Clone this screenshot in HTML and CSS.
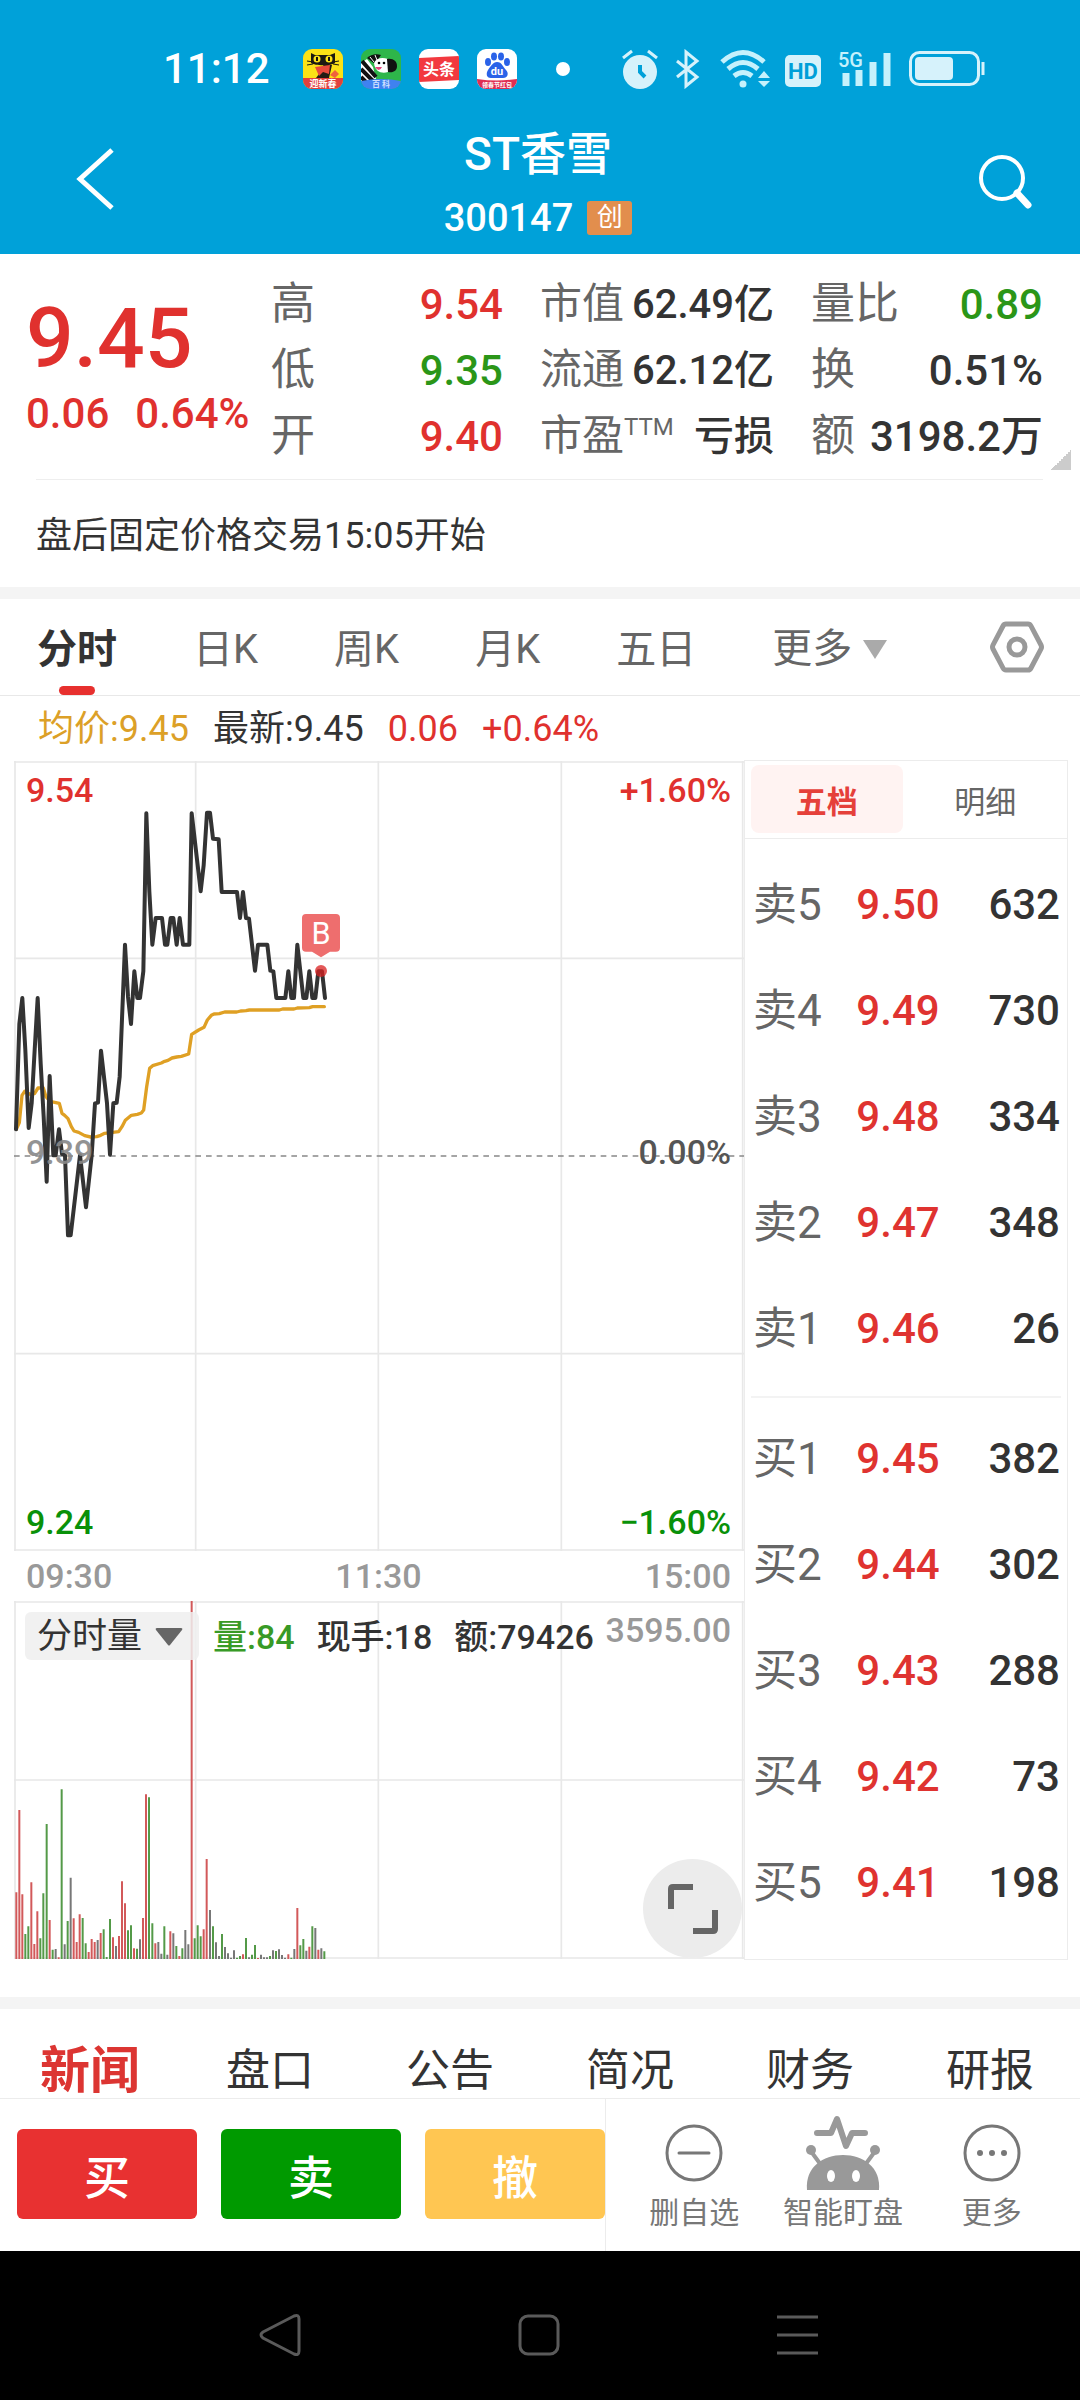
FILE: index.html
```html
<!DOCTYPE html>
<html lang="zh-CN">
<head>
<meta charset="utf-8">
<meta name="viewport" content="width=device-width, initial-scale=1">
<title>ST香雪 300147</title>
<link rel="stylesheet" href="styles.css">
</head>
<body>
<header class="top">
  <div class="status">
    <span class="clock">11:12</span>
    <div class="apps">
      <svg class="app" viewBox="0 0 40 40"><defs><clipPath id="tile"><rect width="40" height="40" rx="9"/></clipPath></defs><g clip-path="url(#tile)"><rect width="40" height="40" fill="#fbe216"/><path d="M8 4l4 2h15l5-2v10c-4 3-20 3-24 0z" fill="#1c1a12"/><path d="M4 12l6 1M4 16l6-1M36 12l-6 1M36 16l-6-1" stroke="#1c1a12"/><circle cx="14" cy="10" r="3.500" fill="#fbe216"/><circle cx="26" cy="10" r="3.500" fill="#fbe216"/><path d="M14 8v4M26 8v4" stroke="#111" stroke-width="2"/><path d="M21 15l8 1-3 13H13l3-4z" fill="#221c14"/><path d="M12 18l15-2-1 9-6-2-4 4z" fill="#e84a3c"/><path d="M27 26l5-5 4 4-4 4z" fill="#f0623c"/><rect y="29" width="40" height="11" fill="#e2403c"/><text x="20" y="38" class="tile-text" font-size="9" fill="#fff">迎新春</text></g></svg>
      <svg class="app" viewBox="0 0 40 40"><g clip-path="url(#tile)"><rect width="40" height="40" fill="#2eb64a"/><path d="M0 14l6-4 6 8 3 12-15 2z" fill="#fff"/><path d="M0 20l12 12M1 12l14 16M0 28l5 5" stroke="#111" stroke-width="4"/><path d="M6 9c3-3 9-5 14-3l-6 9z" fill="#111"/><path d="M9 8l4 5M14 6l2 5" stroke="#fff" stroke-width="1"/><path d="M13 14c2-5 8-6 14-4v13c-6 2-13 0-14-9z" fill="#fff"/><path d="M26 10c6-1 10 2 10 7s-4 7-9 6z" fill="#111"/><circle cx="18" cy="14" r="1.300"/><circle cx="23" cy="14" r="1.300"/><path d="M14 18h7q-3 6-7 0z" fill="#e4447a"/><path d="M0 32q20-4 40 0v8H0z" fill="#3f82f0"/><text x="20" y="38" class="tile-text" font-size="8" fill="#cfe0ff">百 科</text></g></svg>
      <svg class="app" viewBox="0 0 40 40"><g clip-path="url(#tile)"><rect width="40" height="40" fill="#fff"/><path d="M0 9l40-2v24L0 33z" fill="#f2393f"/><text x="20" y="26" class="tile-text" font-size="16" fill="#fff">头条</text></g></svg>
      <svg class="app" viewBox="0 0 40 40"><g clip-path="url(#tile)"><rect width="40" height="40" fill="#fff"/><g fill="#2a62e8"><ellipse cx="11" cy="13" rx="3" ry="4"/><ellipse cx="17" cy="7.500" rx="3" ry="4"/><ellipse cx="24" cy="7.500" rx="3" ry="4"/><ellipse cx="30" cy="13" rx="3" ry="4"/><path d="M20 13c5 0 6 5 9 8s2 8-3 8H14c-5 0-5-5-3-8s5-8 9-8z"/></g><text x="20" y="26" font-size="11" class="tile-text" fill="#fff">du</text><path d="M0 30q20 3 40 0v10H0z" fill="#df2e52"/><text x="20" y="38" class="tile-text" font-size="6" fill="#fff">领春节红包</text></g></svg>
    </div>
    <span class="dot"></span>
    <div class="signals">
      <svg width="38" height="40" viewBox="0 0 38 40"><circle cx="18" cy="23" r="17" fill="#d6f2fb"/><path d="M1 9l9-7M26 2l9 7" stroke="#d6f2fb" stroke-width="3"/><path d="M18 16v7l5 5" fill="none" stroke="#00a1d9" stroke-width="4"/></svg>
      <svg width="30" height="40" viewBox="0 0 30 40"><path d="M2 12l20 16-11 9V3l11 9L2 28" fill="none" stroke="#d6f2fb" stroke-width="3"/></svg>
      <svg width="50" height="40" viewBox="0 0 50 40"><g fill="none" stroke="#c6f1fc" stroke-width="5"><path d="M2 13Q23-6 44 13"/><path d="M8 20Q23 7 38 20"/><path d="M14 27Q23 20 32 27"/></g><circle cx="23" cy="35" r="3.500" fill="#c6f1fc"/><path d="M38 29l6-7 6 7zM38 32l6 6 6-6z" fill="#c6f1fc"/></svg>
      <svg width="38" height="40" viewBox="0 0 38 40"><rect y="6" width="36" height="32" rx="5" fill="#d6f2fb"/><text x="18" y="30" text-anchor="middle" font-size="22" font-weight="700" fill="#009fd8">HD</text></svg>
      <svg width="56" height="40" viewBox="0 0 56 40"><text x="0" y="18" font-size="20" font-weight="500" fill="#c6f1fc">5G</text><path d="M8 24v13M21 21v16M35 13v24M49 4v33" stroke="#c6f1fc" stroke-width="7"/></svg>
      <svg width="76" height="40" viewBox="0 0 76 40"><rect x="1.500" y="3.500" width="68" height="32" rx="9" fill="none" stroke="#d6f2fb" stroke-width="3"/><rect x="6" y="8" width="38" height="23" rx="4" fill="#d6f2fb"/><path d="M74 13v13" stroke="#d6f2fb" stroke-width="3"/></svg>
    </div>
  </div>
  <div class="titlebar">
    <button class="icon-btn" aria-label="返回"><svg width="60" height="64" viewBox="0 0 60 64"><path d="M50 3L18 32l32 29" fill="none" stroke="#fff" stroke-width="5"/></svg></button>
    <div class="title">
      <h1>ST香雪</h1>
      <p class="code">300147<span class="badge">创</span></p>
    </div>
    <button class="icon-btn" aria-label="搜索"><svg width="60" height="60" viewBox="0 0 60 60"><circle cx="24" cy="29" r="21" fill="none" stroke="#fff" stroke-width="4"/><path d="M39 44l11 12" stroke="#fff" stroke-width="7" stroke-linecap="round"/></svg></button>
  </div>
</header>

<main>
  <section class="quote">
    <div class="last up">
      <strong>9.45</strong>
      <p><span>0.06</span><span>0.64%</span></p>
    </div>
    <dl class="stats">
      <div><dt>高</dt><dd class="up">9.54</dd></div>
      <div><dt>低</dt><dd class="down">9.35</dd></div>
      <div><dt>开</dt><dd class="up">9.40</dd></div>
    </dl>
    <dl class="stats tight">
      <div><dt>市值</dt><dd>62.49亿</dd></div>
      <div><dt>流通</dt><dd>62.12亿</dd></div>
      <div><dt>市盈<sup>TTM</sup></dt><dd>亏损</dd></div>
    </dl>
    <dl class="stats">
      <div><dt>量比</dt><dd class="down">0.89</dd></div>
      <div><dt>换</dt><dd>0.51%</dd></div>
      <div><dt>额</dt><dd>3198.2万</dd></div>
    </dl>
    <span class="corner"></span>
  </section>
  <p class="notice">盘后固定价格交易15:05开始</p>

  <nav class="periods">
    <button class="active">分时</button>
    <button>日K</button>
    <button>周K</button>
    <button>月K</button>
    <button>五日</button>
    <button class="more">更多<svg width="26" height="20" viewBox="0 0 26 20"><path d="M1 1h24L13 20z" fill="#aaa"/></svg></button>
    <button class="setting" aria-label="设置"><svg width="54" height="52" viewBox="0 0 54 52"><path d="M16 3h22q2 0 3 2l10 19q1 2 0 4L41 47q-1 2-3 2H16q-2 0-3-2L3 28q-1-2 0-4L13 5q1-2 3-2z" fill="none" stroke="#999" stroke-width="5"/><circle cx="27" cy="26" r="8" fill="none" stroke="#999" stroke-width="5"/></svg></button>
  </nav>

  <p class="legend"><span class="avg">均价:9.45</span><span>最新:9.45</span><span class="up">0.06</span><span class="up">+0.64%</span></p>

  <section class="board">
    <div class="charts">
      <div class="chart">
        <svg class="plot" viewBox="42 33 2190 2370">
          <path class="grid" d="M45 33V2403M587 33V2403M1135 33V2403M1684 33V2403M2228 33V2403M42 36H2232M42 625H2232M42 1811H2232M42 2400H2232"/>
          <path d="M42 1218H2232" stroke="#888" stroke-width="5" stroke-dasharray="17 15"/>
          <polyline class="avg-line" points="49,1138 58,1118 66,1036 74,1024 84,1030 94,1034 104,1030 114,1014 130,1014 138,1040 150,1054 178,1060 186,1090 194,1096 204,1106 214,1130 222,1143 236,1147 254,1157 272,1161 290,1160 302,1156 314,1150 356,1145 366,1130 376,1111 394,1096 412,1093 424,1089 431,1080 440,1010 449,955 458,947 484,939 494,934 504,931 516,924 530,921 544,919 566,912 575,853 596,840 612,832 622,810 634,796 642,792 658,791 674,786 710,786 722,783 738,782 748,780 838,780 848,777 882,777 892,774 928,773 938,770 973,770"/>
          <polyline class="price-line" points="48,1138 58,822 67,744 76,900 86,1134 95,1060 104,900 113,744 122,940 131,1100 140,1295 149,978 160,1216 167,1216 177,1138 186,1212 195,1216 204,1456 212,1456 222,1370 240,1216 258,1372 275,1216 285,1060 294,1058 303,902 321,1060 330,1214 340,1060 350,1058 359,980 375,584 384,740 393,822 403,664 412,744 420,744 430,664 439,190 448,424 457,584 467,504 486,504 495,584 502,584 512,504 520,504 530,584 539,504 549,584 568,584 575,190 593,346 602,424 611,346 621,188 630,188 639,266 656,268 665,426 711,426 720,504 729,426 738,504 747,506 765,662 774,584 802,584 811,662 820,664 829,744 856,744 865,664 874,744 882,744 892,584 910,744 919,744 928,664 937,744 946,744 955,664 966,664 975,744"/>
          <circle cx="963" cy="663" r="18" fill="#d92020" fill-opacity=".75"/>
          <path d="M918 492H1008q12 0 12 12V593q0 12-12 12H990L963 622 936 605H918q-12 0-12-12V504q0-12 12-12z" fill="#ee6e6e"/>
          <text x="963" y="582" text-anchor="middle" font-size="92" font-weight="400" fill="#fff">B</text>
        </svg>
        <span class="mark tl up">9.54</span>
        <span class="mark tr up">+1.60%</span>
        <span class="mark ml">9.39</span>
        <span class="mark mr">0.00%</span>
        <span class="mark bl green">9.24</span>
        <span class="mark br green">−1.60%</span>
      </div>
      <div class="times"><span>09:30</span><span>11:30</span><span>15:00</span></div>
      <div class="chart">
        <svg class="plot" viewBox="42 183 2190 1074">
          <path class="grid" d="M45 183V1257M587 183V1257M1135 183V1257M1684 183V1257M2228 183V1257M42 186H2232M42 720H2232M42 1254H2232"/>
          <path class="bar" stroke="#d2595a" d="M49 1258V1057M58 1258V810M67 1258V1063M94 1258V1027M103 1258V1212M112 1258V1114M149 1258V1140M176 1258V1252M221 1258V1135M230 1258V1206M239 1258V1123M266 1258V1236M275 1258V1197M284 1258V1206M302 1258V1179M339 1258V1192M357 1258V1188M366 1258V1024M375 1258V1090M402 1258V1225M429 1258V1134M438 1258V763M466 1258V1210M511 1258V1174M538 1258V1248M575 1258V183M611 1258V1168M620 1258V957M729 1258V1243M774 1258V1254M865 1258V1243M892 1258V1104M928 1258V1220M955 1258V1229"/>
          <path class="bar" stroke="#549a48" d="M76 1258V1182M85 1258V1159M121 1258V1195M130 1258V1060M140 1258V852M158 1258V1229M185 1258V748M203 1258V1143M248 1258V1134M257 1258V1210M311 1258V1168M320 1258V1251M330 1258V1137M384 1258V1171M393 1258V1156M411 1258V1226M447 1258V772M457 1258V1150M493 1258V1159M529 1258V1218M547 1258V1225M584 1258V1195M593 1258V1156M602 1258V1189M639 1258V1159M666 1258V1182M711 1258V1253M720 1258V1248M738 1258V1194M756 1258V1244M765 1258V1215M810 1258V1248M828 1258V1233M874 1258V1253M901 1258V1216M910 1258V1197M937 1258V1159M973 1258V1234"/>
          <path class="bar" stroke="#777" d="M167 1258V1227M194 1258V1213M212 1258V1013M293 1258V1200M348 1258V1218M420 1258V1198M475 1258V1206M484 1258V1241M502 1258V1244M520 1258V1180M556 1258V1170M565 1258V1213M630 1258V1110M648 1258V1207M657 1258V1248M675 1258V1221M684 1258V1240M693 1258V1253M702 1258V1231M747 1258V1252M783 1258V1244M792 1258V1252M801 1258V1252M819 1258V1231M837 1258V1228M846 1258V1245M855 1258V1253M883 1258V1227M919 1258V1232M946 1258V1164M964 1258V1225"/>
        </svg>
        <div class="vol-head">
          <button class="vol-type">分时量<svg width="28" height="20" viewBox="0 0 28 20"><path d="M2 1h24q2 0 1 2L15 18q-1 1-2 0L1 3q-1-2 1-2z" fill="#666"/></svg></button>
          <span class="green-text">量:84</span><span>现手:18</span><span>额:79426</span>
        </div>
        <span class="mark vol-max">3595.00</span>
        <button class="expand" aria-label="全屏"><svg width="54" height="54" viewBox="0 0 54 54"><path d="M27 5H7q-2 0-2 2v20M27 49h20q2 0 2-2V28" fill="none" stroke="#666" stroke-width="6"/></svg></button>
      </div>
    </div>

    <div class="book">
      <div class="book-tabs"><button class="on">五档</button><button>明细</button></div>
      <table class="sell">
        <tr><th>卖5</th><td>9.50</td><td>632</td></tr>
        <tr><th>卖4</th><td>9.49</td><td>730</td></tr>
        <tr><th>卖3</th><td>9.48</td><td>334</td></tr>
        <tr><th>卖2</th><td>9.47</td><td>348</td></tr>
        <tr><th>卖1</th><td>9.46</td><td>26</td></tr>
      </table>
      <hr>
      <table>
        <tr><th>买1</th><td>9.45</td><td>382</td></tr>
        <tr><th>买2</th><td>9.44</td><td>302</td></tr>
        <tr><th>买3</th><td>9.43</td><td>288</td></tr>
        <tr><th>买4</th><td>9.42</td><td>73</td></tr>
        <tr><th>买5</th><td>9.41</td><td>198</td></tr>
      </table>
    </div>
  </section>

  <nav class="info">
    <a class="active" href="#news">新闻</a><a href="#pan">盘口</a><a href="#notice">公告</a><a href="#brief">简况</a><a href="#finance">财务</a><a href="#report">研报</a>
  </nav>
</main>

<footer>
  <div class="actions">
    <div class="trade">
      <button class="buy">买</button><button class="sell-btn">卖</button><button class="cancel">撤</button>
    </div>
    <div class="tools">
      <button><svg width="76" height="76" viewBox="0 0 76 76"><circle cx="38" cy="38" r="27" fill="none" stroke="#777" stroke-width="3"/><path d="M23 38h30" stroke="#777" stroke-width="3" stroke-linecap="round"/></svg>删自选</button>
      <button><svg width="76" height="76" viewBox="0 0 76 76"><g fill="none" stroke="#999" stroke-linejoin="round" stroke-linecap="round"><path d="M12 18h14L32 4l9 27 6-13h13" stroke-width="6"/><path d="M5 35l11 15M71 35L60 50" stroke-width="4"/></g><circle cx="6" cy="35" r="5" fill="#999"/><circle cx="70" cy="35" r="5" fill="#999"/><path d="M2 75C0 52 18 40 38 40s38 12 36 35z" fill="#999"/><ellipse cx="26" cy="61" rx="4" ry="6" fill="#fff"/><ellipse cx="51" cy="61" rx="4" ry="6" fill="#fff"/></svg>智能盯盘</button>
      <button><svg width="76" height="76" viewBox="0 0 76 76"><circle cx="38" cy="38" r="27" fill="none" stroke="#777" stroke-width="3"/><g fill="#777"><circle cx="26" cy="38" r="3"/><circle cx="38" cy="38" r="3"/><circle cx="50" cy="38" r="3"/></g></svg>更多</button>
    </div>
  </div>
  <div class="system">
    <button aria-label="返回"><svg width="44" height="44" viewBox="0 0 44 44"><path d="M4 19L35 3q5-2 5 3v32q0 5-5 3L4 25q-4-3 0-6z" fill="none" stroke="#5a5a5a" stroke-width="3"/></svg></button>
    <button aria-label="主页"><svg width="44" height="44" viewBox="0 0 44 44"><rect x="3" y="3" width="38" height="38" rx="8" fill="none" stroke="#5a5a5a" stroke-width="3"/></svg></button>
    <button aria-label="菜单"><svg width="44" height="44" viewBox="0 0 44 44"><path d="M2 4h41M2 22h41M2 40h41" stroke="#5a5a5a" stroke-width="3"/></svg></button>
  </div>
</footer>
</body>
</html>
```
FILE: styles.css
```css
* { box-sizing: border-box; }
body {
  margin: 0;
  background: #fff;
  color: #333;
  font-family: Roboto, "Noto Sans CJK SC", sans-serif;
  font-size: 42px;
}
button {
  font: inherit;
  color: inherit;
  background: none;
  border: 0;
  padding: 0;
  margin: 0;
}
h1, p, dl, dd, dt { margin: 0; }
svg { display: block; flex: none; }

.up { color: #e0312e; }
.down { color: #2b9618; }
.green { color: #099109; }
.green-text { color: #389a26; }

/* header */
.top { background: #00a1d9; color: #fff; }
.status { display: flex; align-items: center; height: 94px; padding: 44px 95px 0 163px; }
.status > * { flex: none; }
.clock { width: 140px; font-weight: 500; line-height: 50px; }
.apps { display: flex; gap: 18px; }
.app { width: 40px; height: 40px; }
.tile-text { text-anchor: middle; font-weight: 700; }
.dot { width: 14px; height: 14px; border-radius: 50%; background: #fff; margin-left: 39px; }
.signals { display: flex; margin-left: auto; gap: 15px; }
.titlebar { display: grid; grid-template-columns: 60px 1fr 60px; align-items: center; padding: 10px 42px 0 62px; height: 160px; }
.title { text-align: center; padding: 8px 24px 0 0; }
.title h1 { font-size: 46px; font-weight: 500; line-height: 70px; }
.code { display: flex; align-items: center; justify-content: center; gap: 14px; font-size: 38px; font-weight: 500; line-height: 58px; }
.badge { width: 45px; height: 34px; border-radius: 3px; background: #e28e4d; font-size: 26px; line-height: 32px; font-weight: 400; text-align: center; }

/* quote */
.quote { position: relative; display: grid; grid-template-columns: 1fr 232px 234px 232px; column-gap: 37px; padding: 17px 37px 10px 26px; }
.last { margin-right: -30px; font-weight: 500; }
.last strong { display: block; font-size: 84px; font-weight: 500; line-height: 100px; padding-top: 18px; }
.last p { display: flex; gap: 26px; line-height: 50px; }
.stats div { display: flex; justify-content: space-between; align-items: baseline; line-height: 66px; height: 66px; white-space: nowrap; }
.stats dt { color: #666; font-size: 44px; }
.stats dd { font-weight: 500; }
.tight dt { font-size: 42px; }
.tight dd { font-size: 40px; }
.stats sup { font-size: 24px; line-height: 1; }
.corner { position: absolute; right: 9px; bottom: 9px; width: 20px; height: 20px; background: linear-gradient(135deg, transparent 50%, #ccc 50%); }
.notice { margin: 0 37px 0 36px; border-top: 1px solid #eee; font-size: 36px; line-height: 112px; height: 108px; }

/* period tabs */
.periods { display: flex; align-items: center; gap: 76px; height: 109px; padding: 0 36px 0 37px; border-top: 12px solid #f4f4f4; border-bottom: 1px solid #e8e8e8; font-size: 40px; color: #666; }
.periods button { position: relative; flex: none; line-height: 96px; padding-top: 3px; height: 96px; }
.periods .active { font-weight: 700; color: #333; }
.periods .active::after { content: ""; position: absolute; left: 50%; bottom: 0; width: 36px; height: 9px; margin-left: -18px; border-radius: 5px; background: #e7302e; }
.periods .more { display: flex; align-items: center; gap: 10px; }
.periods .setting { margin-left: auto; padding: 0; }
.legend { display: flex; gap: 24px; padding-left: 38px; font-size: 36px; line-height: 67px; height: 64px; }
.avg { color: #dca027; }

/* charts and order book */
.board { display: flex; align-items: flex-start; padding: 0 12px 37px 14px; border-bottom: 12px solid #f4f4f4; }
.charts { flex: 730; padding-top: 1px; }
.chart { position: relative; font-size: 34px; font-weight: 500; }
.plot { width: 100%; height: auto; }
.grid { fill: none; stroke: #e8e8e8; stroke-width: 5; }
.avg-line, .price-line { fill: none; stroke-linejoin: round; stroke-linecap: round; }
.avg-line { stroke: #dfa024; stroke-width: 10; }
.price-line { stroke: #333; stroke-width: 12; }
.bar { stroke-width: 6; }
.mark { position: absolute; line-height: 40px; }
.tl { left: 12px; top: 9px; }
.tr { right: 13px; top: 9px; }
.ml { left: 12px; top: 371px; color: #888; opacity: .9; }
.mr { right: 13px; top: 371px; color: #555; }
.bl { left: 12px; bottom: 9px; }
.br { right: 13px; bottom: 9px; }
.times { display: flex; justify-content: space-between; padding: 0 13px 0 12px; font-size: 34px; font-weight: 500; line-height: 50px; height: 50px; color: #999; }
.vol-head { position: absolute; left: 11px; top: 11px; display: flex; gap: 22px; line-height: 50px; }
.vol-type { display: flex; align-items: center; justify-content: space-between; width: 174px; height: 48px; padding: 2px 16px 0 12px; margin-right: -8px; border-radius: 6px; background: rgba(238, 238, 238, .85); font-size: 35px; font-weight: 400; }
.vol-max { right: 13px; top: 9px; color: #999; }
.expand { position: absolute; right: 2px; bottom: 1px; width: 99px; height: 99px; border-radius: 50%; background: #ececec; display: grid; place-items: center; }

.book { flex: 322; border: 1px solid #ececec; padding-bottom: 23px; }
.book-tabs { display: flex; gap: 7px; padding: 4px 6px 5px; border-bottom: 1px solid #ececec; font-size: 31px; color: #666; }
.book-tabs button { flex: 1; height: 68px; border-radius: 8px; }
.book-tabs .on { background: #fff3f2; color: #e5403a; font-weight: 700; }
.book table { width: 100%; border-collapse: collapse; table-layout: fixed; }
.book .sell { margin-top: 13px; }
.book tr { height: 106px; }
.book th, .book td { padding: 0; font-weight: 500; line-height: 106px; height: 106px; vertical-align: top; }
.book th { width: 92px; padding-left: 8px; text-align: left; font-size: 44px; font-weight: 400; color: #666; }
.book td { color: #df3330; text-align: center; }
.book td:last-child { width: 108px; color: #333; text-align: right; padding-right: 7px; }
.book hr { border: 0; height: 2px; background: #f3f3f3; margin: 14px 6px 8px; }

/* information tabs */
.info { display: grid; grid-template-columns: repeat(6, 1fr); height: 89px; text-align: center; font-size: 44px; line-height: 124px; }
.info a { color: #333; text-decoration: none; }
.info .active { color: #dc3532; font-size: 50px; font-weight: 700; }

/* footer */
.actions { display: flex; border-top: 1px solid #ececec; height: 153px; }
.trade { flex: 588; display: flex; gap: 24px; align-items: flex-start; padding: 30px 0 0 17px; border-right: 1px solid #ececec; }
.trade button { flex: 1; height: 90px; border-radius: 6px; color: #fff; font-size: 46px; font-weight: 500; }
.buy { background: #e83131; }
.sell-btn { background: #009a00; }
.cancel { background: #ffc652; }
.tools { flex: 446; display: grid; grid-template-columns: repeat(3, 1fr); padding: 16px 14px 0; font-size: 30px; color: #777; }
.tools button { display: flex; flex-direction: column; align-items: center; line-height: 44px; white-space: nowrap; height: 120px; }
.system { display: flex; justify-content: center; gap: 214px; align-items: center; height: 149px; padding: 18px 3px 0 0; background: #000; }
```
